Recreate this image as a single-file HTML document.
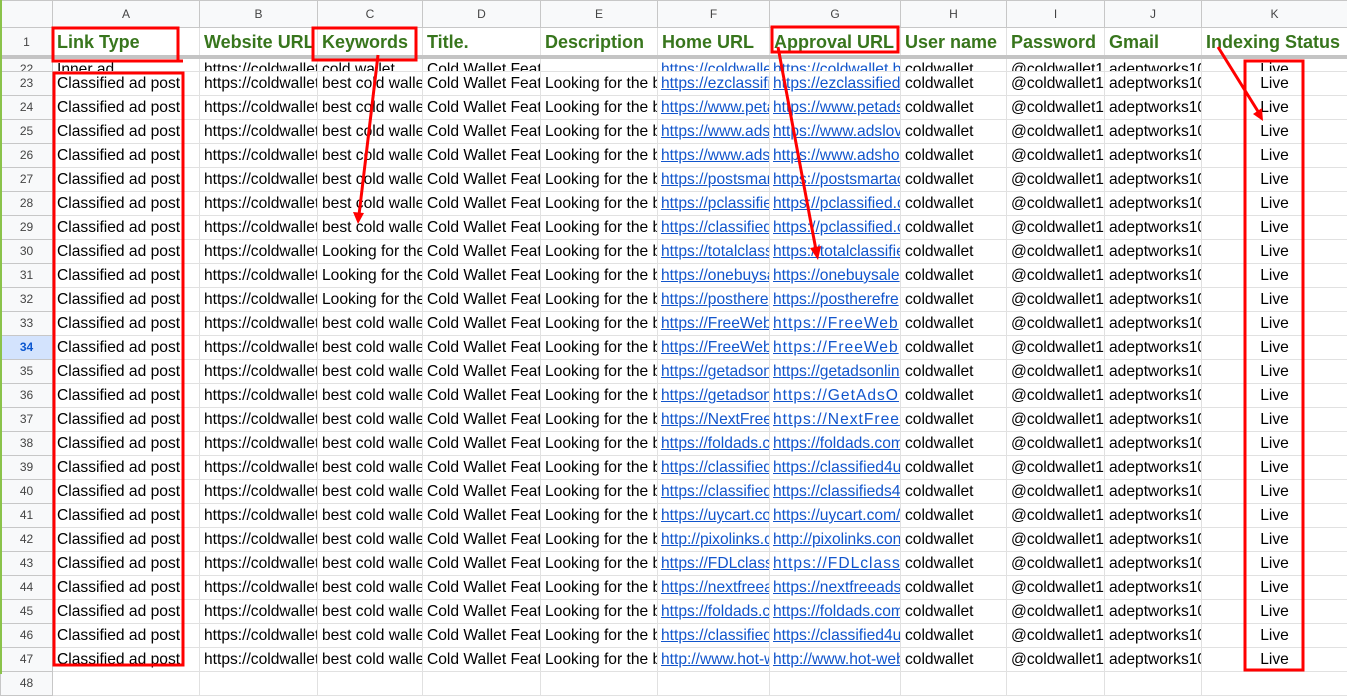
<!DOCTYPE html>
<html><head><meta charset="utf-8"><style>
body{margin:0;width:1347px;height:674px;overflow:hidden;background:#fff;font-family:"Liberation Sans",Arial,sans-serif;position:relative}
table{border-collapse:collapse;table-layout:fixed;position:absolute;left:0;top:0;width:1347px}
td{border:1px solid #e1e1e1;padding:0 0 0 4px;white-space:nowrap;overflow:hidden;font-size:15.6px;color:#000;height:23px;line-height:23px;text-overflow:clip;max-width:0}
td.r{background:#f8f9fa;color:#444;font-size:12px;text-align:center;padding:0;border-color:#c7c7c7}
tr.h td{background:#f8f9fa;color:#444;font-size:12px;text-align:center;height:26px;padding:0;border-color:#c7c7c7}
tr.t td{font-weight:bold;font-size:18px;color:#38761d;height:28px;line-height:28px}
tr.t td.r{font-weight:normal;font-size:12px;color:#444}
tr.p td{height:14px;line-height:3px;vertical-align:bottom}
td.u{color:#1155cc;text-decoration:underline;padding-left:3px}
td.w{letter-spacing:1px}
td.k{text-align:center;padding:0}
tr.s td.r{background:#d3e3fd;color:#0b57d0;font-weight:bold}
.frz{position:absolute;left:0;top:55px;width:1347px;height:4px;background:#c4c4c4}
.gs{position:absolute;left:0;top:0;width:2px;height:674px;background:#8bc34a}
</style></head><body>
<table>
<colgroup><col style="width:52px"><col style="width:147px"><col style="width:118px"><col style="width:105px"><col style="width:118px"><col style="width:117px"><col style="width:112px"><col style="width:131px"><col style="width:106px"><col style="width:98px"><col style="width:97px"><col style="width:146px"></colgroup>
<tr class="h"><td></td><td>A</td><td>B</td><td>C</td><td>D</td><td>E</td><td>F</td><td>G</td><td>H</td><td>I</td><td>J</td><td>K</td></tr>
<tr class="t"><td class="r">1</td><td>Link Type</td><td>Website URL</td><td>Keywords</td><td>Title.</td><td>Description</td><td>Home URL</td><td>Approval URL</td><td>User name</td><td>Password</td><td>Gmail</td><td>Indexing Status</td></tr>
<tr class="p"><td class="r">22</td><td>Inner ad</td><td>https://coldwallet</td><td>cold wallet</td><td>Cold Wallet Features - Secure &amp;</td><td></td><td class="u">https://coldwalle</td><td class="u">https://coldwallet.b</td><td>coldwallet</td><td>@coldwallet1</td><td>adeptworks10</td><td class="k">Live</td></tr>
<tr><td class="r">23</td><td>Classified ad post</td><td>https://coldwallet</td><td>best cold walle</td><td>Cold Wallet Feat</td><td>Looking for the b</td><td class="u">https://ezclassifi</td><td class="u">https://ezclassified</td><td>coldwallet</td><td>@coldwallet1</td><td>adeptworks10</td><td class="k">Live</td></tr>
<tr><td class="r">24</td><td>Classified ad post</td><td>https://coldwallet</td><td>best cold walle</td><td>Cold Wallet Feat</td><td>Looking for the b</td><td class="u">https://www.peta</td><td class="u">https://www.petads</td><td>coldwallet</td><td>@coldwallet1</td><td>adeptworks10</td><td class="k">Live</td></tr>
<tr><td class="r">25</td><td>Classified ad post</td><td>https://coldwallet</td><td>best cold walle</td><td>Cold Wallet Feat</td><td>Looking for the b</td><td class="u">https://www.ads</td><td class="u">https://www.adslov</td><td>coldwallet</td><td>@coldwallet1</td><td>adeptworks10</td><td class="k">Live</td></tr>
<tr><td class="r">26</td><td>Classified ad post</td><td>https://coldwallet</td><td>best cold walle</td><td>Cold Wallet Feat</td><td>Looking for the b</td><td class="u">https://www.ads</td><td class="u">https://www.adsho</td><td>coldwallet</td><td>@coldwallet1</td><td>adeptworks10</td><td class="k">Live</td></tr>
<tr><td class="r">27</td><td>Classified ad post</td><td>https://coldwallet</td><td>best cold walle</td><td>Cold Wallet Feat</td><td>Looking for the b</td><td class="u">https://postsmar</td><td class="u">https://postsmartac</td><td>coldwallet</td><td>@coldwallet1</td><td>adeptworks10</td><td class="k">Live</td></tr>
<tr><td class="r">28</td><td>Classified ad post</td><td>https://coldwallet</td><td>best cold walle</td><td>Cold Wallet Feat</td><td>Looking for the b</td><td class="u">https://pclassifie</td><td class="u">https://pclassified.c</td><td>coldwallet</td><td>@coldwallet1</td><td>adeptworks10</td><td class="k">Live</td></tr>
<tr><td class="r">29</td><td>Classified ad post</td><td>https://coldwallet</td><td>best cold walle</td><td>Cold Wallet Feat</td><td>Looking for the b</td><td class="u">https://classified</td><td class="u">https://pclassified.c</td><td>coldwallet</td><td>@coldwallet1</td><td>adeptworks10</td><td class="k">Live</td></tr>
<tr><td class="r">30</td><td>Classified ad post</td><td>https://coldwallet</td><td>Looking for the</td><td>Cold Wallet Feat</td><td>Looking for the b</td><td class="u">https://totalclass</td><td class="u">https://totalclassifie</td><td>coldwallet</td><td>@coldwallet1</td><td>adeptworks10</td><td class="k">Live</td></tr>
<tr><td class="r">31</td><td>Classified ad post</td><td>https://coldwallet</td><td>Looking for the</td><td>Cold Wallet Feat</td><td>Looking for the b</td><td class="u">https://onebuysa</td><td class="u">https://onebuysale</td><td>coldwallet</td><td>@coldwallet1</td><td>adeptworks10</td><td class="k">Live</td></tr>
<tr><td class="r">32</td><td>Classified ad post</td><td>https://coldwallet</td><td>Looking for the</td><td>Cold Wallet Feat</td><td>Looking for the b</td><td class="u">https://posthere</td><td class="u">https://postherefre</td><td>coldwallet</td><td>@coldwallet1</td><td>adeptworks10</td><td class="k">Live</td></tr>
<tr><td class="r">33</td><td>Classified ad post</td><td>https://coldwallet</td><td>best cold walle</td><td>Cold Wallet Feat</td><td>Looking for the b</td><td class="u">https://FreeWeb</td><td class="u w">https://FreeWeb</td><td>coldwallet</td><td>@coldwallet1</td><td>adeptworks10</td><td class="k">Live</td></tr>
<tr class="s"><td class="r">34</td><td>Classified ad post</td><td>https://coldwallet</td><td>best cold walle</td><td>Cold Wallet Feat</td><td>Looking for the b</td><td class="u">https://FreeWeb</td><td class="u w">https://FreeWeb</td><td>coldwallet</td><td>@coldwallet1</td><td>adeptworks10</td><td class="k">Live</td></tr>
<tr><td class="r">35</td><td>Classified ad post</td><td>https://coldwallet</td><td>best cold walle</td><td>Cold Wallet Feat</td><td>Looking for the b</td><td class="u">https://getadson</td><td class="u">https://getadsonlin</td><td>coldwallet</td><td>@coldwallet1</td><td>adeptworks10</td><td class="k">Live</td></tr>
<tr><td class="r">36</td><td>Classified ad post</td><td>https://coldwallet</td><td>best cold walle</td><td>Cold Wallet Feat</td><td>Looking for the b</td><td class="u">https://getadson</td><td class="u w">https://GetAdsO</td><td>coldwallet</td><td>@coldwallet1</td><td>adeptworks10</td><td class="k">Live</td></tr>
<tr><td class="r">37</td><td>Classified ad post</td><td>https://coldwallet</td><td>best cold walle</td><td>Cold Wallet Feat</td><td>Looking for the b</td><td class="u">https://NextFree</td><td class="u w">https://NextFree</td><td>coldwallet</td><td>@coldwallet1</td><td>adeptworks10</td><td class="k">Live</td></tr>
<tr><td class="r">38</td><td>Classified ad post</td><td>https://coldwallet</td><td>best cold walle</td><td>Cold Wallet Feat</td><td>Looking for the b</td><td class="u">https://foldads.c</td><td class="u">https://foldads.com</td><td>coldwallet</td><td>@coldwallet1</td><td>adeptworks10</td><td class="k">Live</td></tr>
<tr><td class="r">39</td><td>Classified ad post</td><td>https://coldwallet</td><td>best cold walle</td><td>Cold Wallet Feat</td><td>Looking for the b</td><td class="u">https://classified</td><td class="u">https://classified4u</td><td>coldwallet</td><td>@coldwallet1</td><td>adeptworks10</td><td class="k">Live</td></tr>
<tr><td class="r">40</td><td>Classified ad post</td><td>https://coldwallet</td><td>best cold walle</td><td>Cold Wallet Feat</td><td>Looking for the b</td><td class="u">https://classified</td><td class="u">https://classifieds4</td><td>coldwallet</td><td>@coldwallet1</td><td>adeptworks10</td><td class="k">Live</td></tr>
<tr><td class="r">41</td><td>Classified ad post</td><td>https://coldwallet</td><td>best cold walle</td><td>Cold Wallet Feat</td><td>Looking for the b</td><td class="u">https://uycart.co</td><td class="u">https://uycart.com/</td><td>coldwallet</td><td>@coldwallet1</td><td>adeptworks10</td><td class="k">Live</td></tr>
<tr><td class="r">42</td><td>Classified ad post</td><td>https://coldwallet</td><td>best cold walle</td><td>Cold Wallet Feat</td><td>Looking for the b</td><td class="u">http://pixolinks.c</td><td class="u">http://pixolinks.con</td><td>coldwallet</td><td>@coldwallet1</td><td>adeptworks10</td><td class="k">Live</td></tr>
<tr><td class="r">43</td><td>Classified ad post</td><td>https://coldwallet</td><td>best cold walle</td><td>Cold Wallet Feat</td><td>Looking for the b</td><td class="u">https://FDLclass</td><td class="u w">https://FDLclass</td><td>coldwallet</td><td>@coldwallet1</td><td>adeptworks10</td><td class="k">Live</td></tr>
<tr><td class="r">44</td><td>Classified ad post</td><td>https://coldwallet</td><td>best cold walle</td><td>Cold Wallet Feat</td><td>Looking for the b</td><td class="u">https://nextfreea</td><td class="u">https://nextfreeads</td><td>coldwallet</td><td>@coldwallet1</td><td>adeptworks10</td><td class="k">Live</td></tr>
<tr><td class="r">45</td><td>Classified ad post</td><td>https://coldwallet</td><td>best cold walle</td><td>Cold Wallet Feat</td><td>Looking for the b</td><td class="u">https://foldads.c</td><td class="u">https://foldads.com</td><td>coldwallet</td><td>@coldwallet1</td><td>adeptworks10</td><td class="k">Live</td></tr>
<tr><td class="r">46</td><td>Classified ad post</td><td>https://coldwallet</td><td>best cold walle</td><td>Cold Wallet Feat</td><td>Looking for the b</td><td class="u">https://classified</td><td class="u">https://classified4u</td><td>coldwallet</td><td>@coldwallet1</td><td>adeptworks10</td><td class="k">Live</td></tr>
<tr><td class="r">47</td><td>Classified ad post</td><td>https://coldwallet</td><td>best cold walle</td><td>Cold Wallet Feat</td><td>Looking for the b</td><td class="u">http://www.hot-w</td><td class="u">http://www.hot-web</td><td>coldwallet</td><td>@coldwallet1</td><td>adeptworks10</td><td class="k">Live</td></tr>
<tr><td class="r">48</td><td></td><td></td><td></td><td></td><td></td><td></td><td></td><td></td><td></td><td></td><td></td></tr>
</table>
<div class="frz"></div>
<div class="gs"></div>
<svg width="1347" height="674" style="position:absolute;left:0;top:0" fill="none" stroke="#f00" stroke-width="3">
<rect x="53" y="28" width="125" height="33"/>
<line x1="52" y1="61" x2="183" y2="61"/>
<rect x="54" y="73" width="129" height="592"/>
<rect x="313" y="28" width="103" height="32"/>
<rect x="772" y="27" width="126" height="25"/>
<rect x="1245" y="61" width="58" height="609"/>
<line x1="378" y1="55" x2="359" y2="215"/>
<polygon points="353,212 358,224 364,213" fill="#f00" stroke="none"/>
<line x1="778" y1="47" x2="816" y2="250"/>
<polygon points="810,248 818,260 821,246" fill="#f00" stroke="none"/>
<line x1="1218" y1="47" x2="1259" y2="113"/>
<polygon points="1253,114 1263,121 1262,108" fill="#f00" stroke="none"/>
</svg>
</body></html>
